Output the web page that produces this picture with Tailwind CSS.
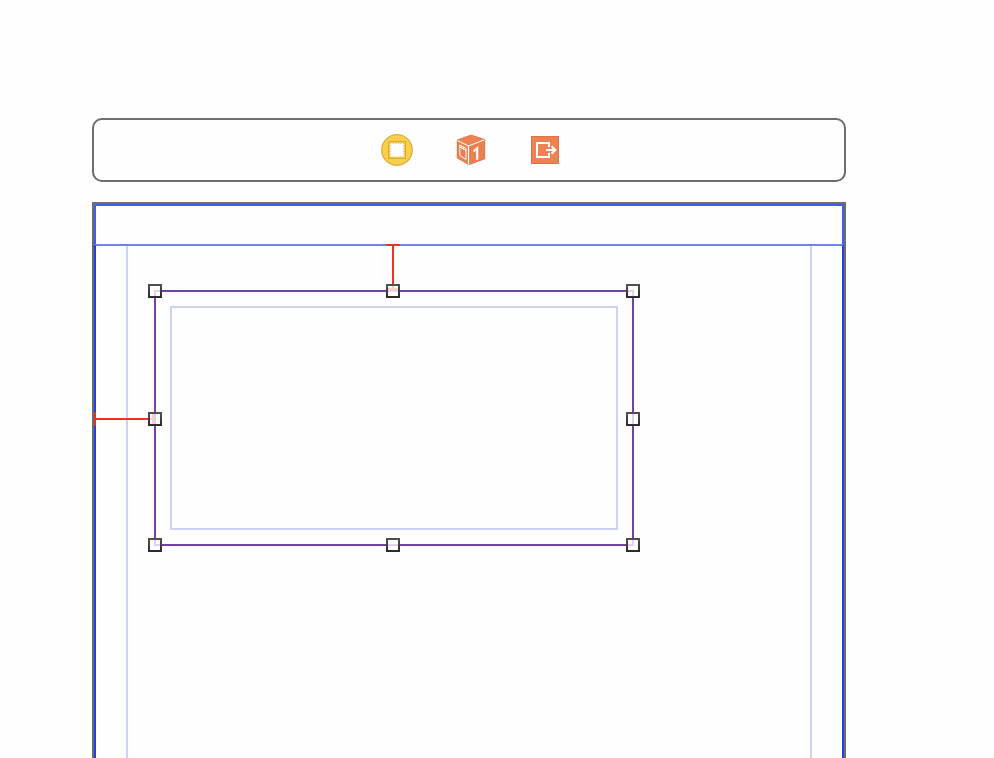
<!DOCTYPE html>
<html lang="en">
<head>
<meta charset="utf-8">
<title>Interface canvas</title>
<script src="https://cdn.jsdelivr.net/npm/@tailwindcss/browser@4"></script>
</head>
<body class="h-screen overflow-hidden bg-[#fefefe]">
<main class="flex h-[758px] flex-col gap-5 overflow-hidden pl-[92px] pt-[118px]">
  <header class="flex h-16 w-[754px] shrink-0 items-center justify-center gap-[42px] rounded-[10px] border-2 border-[#6d6d6d] pl-1">
    <svg class="size-8" viewBox="0 0 32 32">
      <circle cx="16" cy="16" r="15.3" fill="#f8cf4b" stroke="#dfb043" stroke-width="1.3"/>
      <rect x="7.5" y="7.5" width="17" height="17" fill="#f5c843" stroke="#dcab3e"/>
      <rect x="9" y="9" width="14" height="14" fill="#fff"/>
      <rect x="9.5" y="9.5" width="13" height="13" fill="none" stroke="#e3b64a" stroke-dasharray="1 1.6" stroke-dashoffset=".5"/>
    </svg>
    <svg class="size-8" viewBox="0 0 32 32">
      <path d="M16 1 30 5.5V25L14 31 2 24V6Z" fill="#ec7f50"/>
      <path d="M2 6 16 1 30 5.5 13.5 12Z" fill="#ed8153" stroke="#d97047" stroke-width=".6"/>
      <path d="M2.5 6.5 13.5 12 29.5 5.8M13.5 12V30.5" fill="none" stroke="#fff" stroke-width="1.1"/>
      <path d="M2.2 6.5V24L13.5 30.7 29.8 24.8V6" fill="none" stroke="#d97047" stroke-width=".6"/>
      <path d="M4.8 11 11 14.3V25.5L4.8 21.5ZM4.8 13 11 16.4M6.2 12V14M8.3 13V15.2" fill="none" stroke="#fff" stroke-width="1"/>
      <path d="M18.5 17.5 22.2 14.3V25.8" fill="none" stroke="#fff" stroke-width="2.1"/>
    </svg>
    <svg class="size-8" viewBox="0 0 32 32">
      <rect x="2.5" y="2.5" width="27" height="27" fill="#ed8252" stroke="#db7549"/>
      <path d="M20 13V9H8V23H20V19" fill="none" stroke="#fff" stroke-width="2"/>
      <path d="M17 16H26M22.5 12.2 26.3 16 22.5 19.8" fill="none" stroke="#fff" stroke-width="2"/>
    </svg>
  </header>

  <section class="relative h-[600px] w-[754px] shrink-0 border-2 border-[#6d6d69]">
    <div class="flex h-full flex-col">
      <div class="h-10 shrink-0 border-x-2 border-t-2 border-[#425df2]"></div>
      <div class="flex grow justify-between border-x-2 border-t-2 border-x-[#2040ec] border-t-[#6f83f8]">
        <div class="w-8 border-r-2 border-[#ccd2f8]"></div>
        <div class="w-8 border-l-2 border-[#ccd2f8]"></div>
      </div>
    </div>

    <!-- Selected view and its layout margins -->
    <div class="absolute left-[60px] top-[86px] h-[256px] w-[480px] border-2 border-[#7742a6] p-[14px]">
      <div class="h-full border-2 border-[#ccd2f8]"></div>
    </div>

    <!-- Distance constraints -->
    <svg class="absolute left-0 top-0 overflow-visible" width="750" height="554" viewBox="94 204 750 554" shape-rendering="crispEdges">
      <path d="M386 244H400V246H394V290H392V246H386Z" fill="#ea3323"/>
      <path d="M94 412H96V418H150V420H96V426H94Z" fill="#ea3323"/>
      <rect x="94" y="412" width="2" height="14" fill="#d63632"/>
    </svg>

    <!-- Resize handles -->
    <svg class="absolute left-0 top-0 overflow-visible" width="750" height="554" viewBox="94 204 750 554">
      <defs>
        <linearGradient id="edge" x1="0" y1="0" x2="0" y2="1">
          <stop offset="0" stop-color="#505050"/><stop offset="1" stop-color="#2c2c2c"/>
        </linearGradient>
        <rect id="handle" x="1" y="1" width="12" height="12" fill="#fefefe" stroke="url(#edge)" stroke-width="2"/>
      </defs>
      <use href="#handle" x="148" y="284"/><use href="#handle" x="386" y="284"/><use href="#handle" x="626" y="284"/>
      <use href="#handle" x="148" y="412"/><use href="#handle" x="626" y="412"/>
      <use href="#handle" x="148" y="538"/><use href="#handle" x="386" y="538"/><use href="#handle" x="626" y="538"/>
      <g fill="#dfd2eb">
        <path d="M154 290H160V292H156V296H154Z"/>
        <path d="M628 290H634V296H632V292H628Z"/>
        <path d="M154 540H156V544H160V546H154Z"/>
        <path d="M632 540H634V546H628V544H632Z"/>
        <path d="M388 290H398V292H388ZM388 544H398V546H388ZM154 414H156V424H154ZM632 414H634V424H632Z"/>
      </g>
      <path d="M388 288H398V290H388ZM392 286H394V288H392ZM152 414H154V424H152ZM150 418H152V420H150Z" fill="#fad0ca"/>
    </svg>
  </section>
</main>
</body>
</html>
